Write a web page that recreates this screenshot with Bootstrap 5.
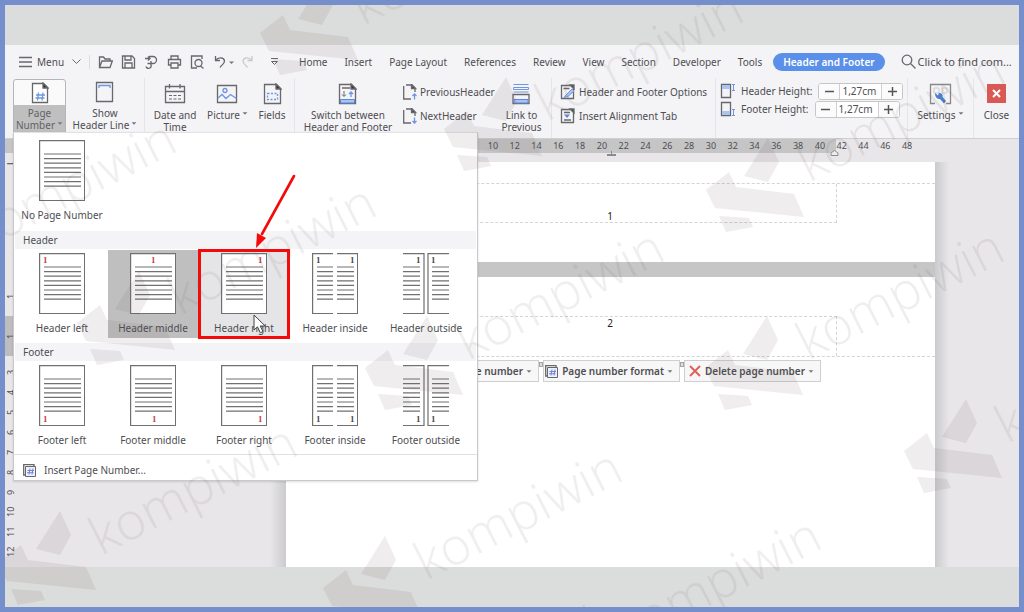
<!DOCTYPE html>
<html lang="en">
<head>
<meta charset="utf-8">
<meta name="viewport" content="width=device-width, initial-scale=1">
<title>Header and Footer</title>
<link href="https://cdn.jsdelivr.net/npm/bootstrap@5.3.0/dist/css/bootstrap.min.css" rel="stylesheet">
<style>
:root{--ink:#4e4e52;--chrome:#f4f3f6;--canvas:#e8e6e9;--rule:#c5c5c6}
body{font-family:"Noto Sans","Open Sans",sans-serif;font-size:10px;line-height:12px;color:var(--ink)}
svg{display:block;flex:none}
.frame{min-height:100vh;border:5px solid #748fcb;background:#dbdddc;padding:40px 0;overflow:hidden}
.plain{border:0;background:none;padding:0;color:inherit;font:inherit;white-space:nowrap}
.ic{fill:none;stroke:#68686c;stroke-width:1.3}
.ic .b{stroke:#6f96e2}
.ic .s{fill:#5b86dc;stroke:none}
/* tab strip */
.strip{background:var(--chrome);height:33px;padding-left:14px}
.quick{width:280px}
.tabs a{color:var(--ink);text-decoration:none;white-space:nowrap}
.tabs{gap:17px}
.tabs .on{background:#5b90ea;color:#fff;font-weight:600;border-radius:10px;padding:3px 10px;margin-left:-6px}
.find{font-size:11px;gap:2px;margin-left:16px;min-width:0}
.find input{font-size:11px;width:100px;height:20px;outline:0}
.find input::placeholder{color:var(--ink);opacity:1}
.bar{width:1px;background:#dddce0;align-self:stretch}
/* ribbon */
.ribbon{display:grid;background:var(--chrome);height:61px;border-bottom:1px solid #cfcfd1;
 grid-template-columns:minmax(0,8fr) minmax(0,53fr) minmax(0,79fr) minmax(0,60fr) minmax(0,45fr) minmax(0,45fr) minmax(0,106fr) minmax(0,91fr) minmax(0,60fr) minmax(0,164fr) minmax(0,192fr) minmax(0,66fr) minmax(0,45fr)}
.cell{display:flex;justify-content:center;align-items:flex-start}
.edge{border-right:1px solid #e6e5e9}
.tool{display:flex;flex-direction:column;align-items:center;gap:4px;padding-top:5px}
.tool svg{height:22px}
.up{padding-top:3px}
.pick{width:100%;border:1px solid #b5b5b7;border-radius:3px 3px 0 0;background:linear-gradient(#fafafa 25px,#bfbfc0 25px);gap:3px;padding:2px 0 4px;margin-top:1px;color:#626266}
.caret{display:inline-block;border:3px solid transparent;border-top-color:#77777b;border-bottom:0;vertical-align:4px;margin-left:2px;transform:scale(.8)}
.pair{display:flex;flex-direction:column;gap:8px;padding-top:6px;align-items:flex-start}
.pair .plain{display:flex;align-items:center;gap:3px;height:16px}
.nudge{padding-left:2px}
.size{display:flex;align-items:center;gap:6px;height:18px;white-space:nowrap}
.size svg{margin-right:-1px}
.spin{display:flex;width:85px;height:17px;border:1px solid #c6c6c9;border-radius:3px;background:#fff;overflow:hidden}
.spin button{width:20px;background:#fbfbfc;display:flex;align-items:center;justify-content:center}
.spin svg{margin:0}
.spin input{flex:1;min-width:0;border:solid #d0d0d3;border-width:0 1px;padding:0 2px;font-size:10px;color:var(--ink);outline:0}
/* page number gallery */
.gallery{position:absolute;z-index:5;left:0;top:54px;width:465px;height:349px;background:#fff;border:1px solid #c9c9cb;border-top-color:#e2e2e4;box-shadow:0 1px 2px #0002;white-space:nowrap}
.tiles{display:flex;gap:1px;padding-left:3px}
.tile{width:90px;height:88px;display:flex;flex-direction:column;align-items:center;padding-top:3px;gap:8px}
.tile.sel{background:#bfbfc0}
.tile.hot{background:#e5e5e7;outline:3px solid #f50a0a;outline-offset:-2px;position:relative}
.band{background:#f4f4f6;height:18px;line-height:18px;padding-left:8px;margin:6px 1px 1px}
.tiles + .band ~ .band{margin-top:5px}
.thumb{stroke:#707070;stroke-width:1.2;fill:#fff}
.num{font-family:"Liberation Serif",serif;font-size:9px;font-weight:700;stroke:none;fill:#c0404a}
.dk{fill:#4a4a4a}
.over{position:absolute;pointer-events:none}
/* document */
.ruler{display:grid;height:14px;grid-template-columns:477fr 436fr 101fr;background:linear-gradient(90deg,var(--rule) 82%,transparent 82%);font-size:9px;line-height:14px}
.marks{display:grid;grid-template-columns:repeat(20,1fr);text-align:center}
.marks span{position:relative}
.stop{position:absolute;right:-3px;bottom:-3px}
.stop.end{right:-8px}
.side{width:12px;font-size:9px}
.side span{display:flex;align-items:center;justify-content:center;height:20px;writing-mode:vertical-rl;transform:rotate(180deg)}
.side .dark{background:#bdbdbf;height:40px;margin:10px 0 6px}
.desk{background:var(--canvas)}
.paper{display:grid;grid-template-columns:269fr 649fr 84fr;margin-top:9px}
.fadel{background:linear-gradient(270deg,#cbcacd,#e8e6e900 16px)}
.fader{background:linear-gradient(90deg,#cbcacd,#e8e6e900 14px)}
.sheet{background:#fff}
.first{height:100px;padding-top:21px}
.second{padding-top:39px}
.split{height:15px;background:#c6c6c7}
.zone{height:39px;margin-right:98px;padding-left:98px;border:dashed #d4d4d6;border-width:0 1px 1px 0;text-align:center;color:#222}
.zone2{height:40px;border-width:1px 1px 0 0}
.dash-line{border-top:1px dashed #d4d4d6}
.chips{display:flex;gap:4px;padding:3px 114px 0 0;justify-content:flex-end}
.chips .plain{position:relative;display:flex;align-items:center;gap:4px;height:22px;border:1px solid #cfcfd2;background:#f7f7f8;font-weight:600;width:137px;justify-content:flex-end;padding-right:6px}
.chips .caret{margin-left:-1px}
.chips .plain + .plain::before{content:"";position:absolute;left:-5px;top:1px;width:4px;height:5px;border:1px solid #a5a5a8;background:#ddd}
.mark-layer{position:absolute;inset:0;width:100%;height:100%;pointer-events:none;z-index:8;fill:#6e5f5a}
.stamp{font-family:"Open Sans",sans-serif;font-weight:300;font-size:52px}
</style>
</head>
<body>
<svg width="0" height="0" class="position-absolute" aria-hidden="true">
 <defs>
  <g id="lines"><path d="M5 14h37M5 18.6h37M5 23.2h37M5 27.8h37M5 32.4h37M5 37h37M5 41.6h37M5 46.2h37"/></g>
  <g id="one"><path d="M.6.6h45v60h-45z"/><use href="#lines"/></g>
  <g id="inner"><path d="M21 .6H.6v60H21M25 .6h20.600v60H25"/><path d="M5 14h16M5 18.6h16M5 23.2h16M5 27.8h16M5 32.400h16M5 37h16M5 41.600h16M5 46.200h16M25 14h17M25 18.600h17M25 23.200h17M25 27.800h17M25 32.400h17M25 37h17M25 41.600h17M25 46.200h17"/></g>
  <g id="outer"><path d="M0 .6h21v60H0M46 .6H25v60h21"/><path d="M0 14h17M0 18.6h17M0 23.200h17M0 27.800h17M0 32.400h17M0 37h17M0 41.600h17M0 46.200h17M29 14h17M29 18.600h17M29 23.200h17M29 27.800h17M29 32.400h17M29 37h17M29 41.600h17M29 46.200h17"/></g>
  <g id="hash" fill="none"><path stroke="#68686c" stroke-width="1.300" d="M3.500 12H1.700V1.700H12v1.800"/><path stroke="#68686c" fill="#eef0fb" d="M3.500 3.500h10v10h-10z"/><path stroke="#6f86d8" d="M8 5.500l-1 6M11 5.500l-1 6M5.500 7.500h6.500M5 9.700h6.500"/></g>
  <g id="minus"><path stroke="#555" stroke-width="1.500" d="M0 4.500h9"/></g>
  <g id="plus"><path stroke="#555" stroke-width="1.500" d="M0 4.500h9M4.500 0v9"/></g>
  <g id="wm">
   <path d="M38-14 62-52 73-28 62-8zM0 0 23-18 30-3 88 4 98 27 9 18zM13 26 43 28 47 37 20 42z"/>
   <text class="stamp" transform="translate(103 -7) rotate(-27)">kompiwin</text>
  </g>
 </defs>
</svg>

<div class="frame d-flex flex-column position-relative">
 <header class="position-relative">
  <div class="strip d-flex align-items-center">
   <div class="quick d-flex align-items-center flex-shrink-0">
    <button class="plain d-flex align-items-center"><svg class="ic me-1" width="14" height="12"><path d="M0 1.500h13M0 6h13M0 10.500h13"/></svg>Menu<svg class="ic ms-2" width="9" height="6"><path stroke-width="1" d="M.5.500l4 4 4-4"/></svg></button>
    <span class="bar ms-2 me-2"></span>
    <button class="plain me-2" aria-label="Open"><svg class="ic" width="15" height="14"><path d="M1.500 12V2h4l1.500 2h5v2M1.500 12.500l2.500-6.500h10.300l-2.300 6.500z"/></svg></button>
    <button class="plain me-2" aria-label="Save"><svg class="ic" width="15" height="14"><path d="M1.500 1h9.500l2.500 2.500v9.500h-12zM4 1v4h6V1M4 13V8h7v5"/></svg></button>
    <button class="plain me-2" aria-label="Export"><svg class="ic" width="15" height="14"><path d="M1 3.500h5M4 1.500l2 2-2 2M5 1.500h4a3.500 3.500 0 0 1 0 7H3.500M7 6v4a2.500 2.500 0 0 1-5 1.500"/></svg></button>
    <button class="plain me-2" aria-label="Print"><svg class="ic" width="15" height="14"><path d="M4 4V1h7v3M4 10H1.500V4.500h12V10H11M4 8h7v5H4z"/></svg></button>
    <button class="plain me-2" aria-label="Preview"><svg class="ic" width="15" height="14"><path d="M7 13H1.500V1H12v3M10.500 11l3 2.500"/><circle cx="8.500" cy="8" r="3.500"/></svg></button>
    <button class="plain" aria-label="Undo"><svg class="ic" width="24" height="14"><path d="M2.500 1v4.500H7M2.500 5.500C5 2 11 2 11.500 6c0 3-3 4-4.500 6.500"/><path d="M16 6.500h5l-2.500 2.500z" fill="#77777b" stroke="none"/></svg></button>
    <button class="plain me-3 ms-1" aria-label="Redo"><svg class="ic" width="13" height="14" style="opacity:.3"><path d="M11 1v4.500H6.500M11 5.500C8 2 2.500 2 2 6c0 3 3 4 4.500 6.500"/></svg></button>
    <button class="plain" aria-label="More"><svg class="ic" width="9" height="9"><path stroke-width="1" d="M1 1.500h7M1.500 4.500h6l-3 3z"/></svg></button>
   </div>
   <nav class="tabs d-flex align-items-center">
    <a href="#">Home</a><a href="#">Insert</a><a href="#">Page Layout</a><a href="#">References</a><a href="#">Review</a><a href="#">View</a><a href="#">Section</a><a href="#">Developer</a><a href="#">Tools</a><a href="#" class="on">Header and Footer</a>
   </nav>
   <label class="find d-flex align-items-center"><svg class="ic" width="15" height="15"><circle cx="6" cy="6" r="4.800"/><path d="M9.500 9.500l5 5"/></svg><input class="plain" type="text" placeholder="Click to find com..." aria-label="Find commands"></label>
  </div>

  <div class="ribbon">
   <div></div>
   <div class="cell position-relative">
    <button class="plain tool pick"><svg class="ic" width="18" height="22"><path d="M1.500 1.500h11l4 4v15h-15z" fill="#fff"/><path d="M12 1l5 5h-5z" fill="#333"/><path class="b" d="M7.500 10.500l-1 8M12 10.500l-1 8M5 13h9M4.500 16h9"/></svg><span>Page<br>Number<i class="caret"></i></span></button>
    <div class="gallery">
     <div class="tiles pt-1"><button class="plain tile"><svg class="thumb" width="46" height="61"><use href="#one"/></svg>No Page Number</button></div>
     <div class="band">Header</div>
     <div class="tiles">
      <button class="plain tile"><svg class="thumb" width="46" height="61"><use href="#one"/><text class="num" x="4" y="10">1</text></svg>Header left</button>
      <button class="plain tile sel"><svg class="thumb" width="46" height="61"><use href="#one"/><text class="num" x="21" y="10">1</text></svg>Header middle</button>
      <button class="plain tile hot"><svg class="thumb" width="46" height="61"><use href="#one"/><text class="num" x="37" y="10">1</text></svg>Header right
       <svg class="over" width="14" height="20" style="left:54px;top:64px"><path d="M1 1v15l3.500-3.200 2.800 6 2.700-1.300-2.800-5.500h5z" fill="#fff" stroke="#444"/></svg>
       <svg class="over" width="44" height="76" style="left:55px;top:-76px"><path d="M40 2 8 60" stroke="#f50a0a" stroke-width="2.600" stroke-linecap="round"/><path d="M2 74 3 59l9 5z" fill="#f50a0a"/></svg></button>
      <button class="plain tile"><svg class="thumb" width="46" height="61"><use href="#inner"/><text class="num dk" x="4" y="10">1</text><text class="num dk" x="38" y="10">1</text></svg>Header inside</button>
      <button class="plain tile"><svg class="thumb" width="46" height="61"><use href="#outer"/><text class="num dk" x="13" y="10">1</text><text class="num dk" x="28" y="10">1</text></svg>Header outside</button>
     </div>
     <div class="band">Footer</div>
     <div class="tiles">
      <button class="plain tile"><svg class="thumb" width="46" height="61"><use href="#one"/><text class="num" x="4" y="57">1</text></svg>Footer left</button>
      <button class="plain tile"><svg class="thumb" width="46" height="61"><use href="#one"/><text class="num" x="22" y="57">1</text></svg>Footer middle</button>
      <button class="plain tile"><svg class="thumb" width="46" height="61"><use href="#one"/><text class="num" x="37" y="57">1</text></svg>Footer right</button>
      <button class="plain tile"><svg class="thumb" width="46" height="61"><use href="#inner"/><text class="num dk" x="4" y="57">1</text><text class="num dk" x="38" y="57">1</text></svg>Footer inside</button>
      <button class="plain tile"><svg class="thumb" width="46" height="61"><use href="#outer"/><text class="num dk" x="13" y="57">1</text><text class="num dk" x="28" y="57">1</text></svg>Footer outside</button>
     </div>
     <div class="border-top mt-1 pt-2 ps-2"><button class="plain d-flex align-items-center gap-2"><svg width="14" height="14"><use href="#hash"/></svg>Insert Page Number...</button></div>
    </div>
   </div>
   <div class="cell edge"><button class="plain tool up"><svg class="ic" width="19" height="22"><path d="M1.500 1.500h16v19h-16z"/><path class="b" d="M4 7V4.500h11V7"/></svg><span>Show<br>Header Line<i class="caret"></i></span></button></div>
   <div class="cell"><button class="plain tool"><svg class="ic" width="22" height="22"><path d="M1.500 3.500h19v16h-19zM1.500 8.500h19M5.500 1v4.500M16 1v4.500"/><path stroke-width="1" d="M5 12.500h3M9.500 12.500h3M14 12.500h3M5 16h3M9.500 16h3M14 16h3"/></svg><span>Date and<br>Time</span></button></div>
   <div class="cell"><button class="plain tool"><svg class="ic" width="22" height="22"><path d="M1.500 2.500h19v17h-19z"/><circle class="b" cx="9" cy="7.500" r="2"/><path class="b" d="M2 15l4-3.500 4 4 4.500-4 6 4"/></svg><span>Picture<i class="caret"></i></span></button></div>
   <div class="cell edge"><button class="plain tool"><svg class="ic" width="19" height="22"><path d="M1.500 1.500h12l4 4v15h-16z"/><path d="M13 1l5 5h-5z" fill="#333"/><path class="b" stroke-dasharray="2 1.500" d="M4.500 10.500h10v6h-10z"/></svg><span>Fields</span></button></div>
   <div class="cell"><button class="plain tool"><svg class="ic" width="19" height="22"><path d="M1.500 1.500h12l4 4v15h-16zM4 5h8"/><path d="M13 1l5 5h-5z" fill="#333"/><path fill="#a9c3f2" stroke="#5b86dc" stroke-width="1" d="M2.500 16.500h14v3.500h-14z"/><path d="M6 8v5M4 11.500l2 2 2-2" stroke-width="1"/><path class="b" d="M13 14V9M11 11l2-2 2 2"/></svg><span>Switch between<br>Header and Footer</span></button></div>
   <div class="pair">
    <button class="plain nudge"><svg class="ic" width="14" height="16"><path d="M8 15H.700V2M3 1h6l3 3v4"/><path d="M8.500.500l4 4h-4z" fill="#444"/><path class="b" d="M11.500 15.500V10M9.500 12l2-2 2 2"/></svg>PreviousHeader</button>
    <button class="plain nudge"><svg class="ic" width="14" height="16"><path d="M8 15H.700V2M3 1h6l3 3v4"/><path d="M8.500.500l4 4h-4z" fill="#444"/><path class="b" d="M11.500 9.500V15M9.500 13l2 2 2-2"/></svg>NextHeader</button>
   </div>
   <div class="cell edge"><button class="plain tool"><svg class="ic" width="18" height="22"><path class="b" stroke-width="1" d="M1.500 1.500h15M1.500 4.500h15v2h-15zM1.500 9h15"/><path d="M1 11.500h16v9H1z"/><path fill="#a9c3f2" stroke="#5b86dc" stroke-width="1" d="M2 16.500h14v3.500H2z"/></svg><span>Link to<br>Previous</span></button></div>
   <div class="pair ps-2 edge">
    <button class="plain"><svg class="ic" width="16" height="16"><path d="M1.500 1.500h10l2 2v11h-12zM3.500 4.500h6"/><path d="M10 1l4 4V1z" fill="#444"/><path fill="#a9c3f2" class="b" stroke-width="1" d="M6 11l6-6 2 2-6 5.500-4 1z"/></svg>Header and Footer Options</button>
    <button class="plain"><svg class="ic" width="16" height="16"><path d="M1.500 1.500h10l2 2v11h-12zM4 4.500h6M4 12h7"/><path d="M10 1l4 4V1z" fill="#444"/><path class="s" d="M4 6.500h6l-3 3.500z"/></svg>Insert Alignment Tab</button>
   </div>
   <div class="edge ps-1 pt-1">
    <div class="size"><svg class="ic" width="16" height="17"><path d="M1.500 1.500h9v13h-9z"/><path fill="#a9c3f2" stroke="none" d="M2 2h8v4H2z"/><path class="b" stroke-width="1" d="M12 1.500h3M12 7.500h3M13.500 1.500v6"/></svg><label for="hh">Header Height:</label><span class="spin"><button class="plain" aria-label="Decrease header height"><svg width="9" height="9"><use href="#minus"/></svg></button><input id="hh" value="1,27cm"><button class="plain" aria-label="Increase header height"><svg width="9" height="9"><use href="#plus"/></svg></button></span></div>
    <div class="size"><svg class="ic" width="16" height="17"><path d="M1.500 1.500h9v13h-9z"/><path fill="#a9c3f2" stroke="none" d="M2 10h8v4H2z"/><path class="b" stroke-width="1" d="M12 8.500h3M12 14.500h3M13.500 8.500v6"/></svg><label for="fh">Footer Height:</label><span class="spin"><button class="plain" aria-label="Decrease footer height"><svg width="9" height="9"><use href="#minus"/></svg></button><input id="fh" value="1,27cm"><button class="plain" aria-label="Increase footer height"><svg width="9" height="9"><use href="#plus"/></svg></button></span></div>
   </div>
   <div class="cell edge"><button class="plain tool"><svg class="ic" width="23" height="22"><path stroke="#888" d="M6 20.500H1.500v-19h20v19H17"/><path stroke="#ccc" stroke-width="1" d="M5 5h5v5H5zM13 5h5v5h-5z"/><path fill="#4a7fd0" stroke="none" d="M6 10l3 2.500 1-2.500c3 0 4 2 3.500 4l3.500 4-2 2.500-4-4.500c-3 0-5-2-5-6z"/></svg><span>Settings<i class="caret"></i></span></button></div>
   <div class="cell"><button class="plain tool"><svg width="19" height="22"><path fill="#d95a55" d="M0 1h19v19H0z"/><path stroke="#fff" stroke-width="2" d="M6 7l7 7M13 7l-7 7"/></svg><span>Close</span></button></div>
  </div>
 </header>

 <main class="desk flex-grow-1 d-flex flex-column">
  <div class="ruler"><span></span><div class="marks"><span>10</span><span>12</span><span>14</span><span>16</span><span>18</span><span>20<svg class="stop" width="9" height="5"><path fill="#8c8c8f" d="M0 3h9v2H0zM4 0h1v3H4z"/></svg></span><span>22</span><span>24</span><span>26</span><span>28</span><span>30</span><span>32</span><span>34</span><span>36</span><span>38</span><span>40<svg class="stop end" width="9" height="6"><path fill="#eee" stroke="#8c8c8f" d="M1 5.500V3l3.500-2.500L8 3v2.500z"/></svg></span><span>42</span><span>44</span><span>46</span><span>48</span></div>
  </div>
  <div class="d-flex flex-grow-1">
   <div class="side flex-shrink-0">
    <span>L</span><div style="height:113px"></div><span>1</span><span class="dark">1</span><span>3</span><span>4</span><span>5</span><span>6</span><span>7</span><span>8</span><span>9</span><span>10</span><span>11</span><span>12</span>
   </div>
   <div class="paper flex-grow-1">
    <div class="fadel"></div>
    <div class="d-flex flex-column">
     <section class="sheet first"><div class="dash-line"></div><div class="zone d-flex align-items-end justify-content-center">1</div></section>
     <div class="split"></div>
     <section class="sheet flex-grow-1 second">
      <div class="zone zone2">2</div><div class="dash-line"></div>
      <div class="chips">
       <button class="plain">Insert page number<i class="caret"></i></button>
       <button class="plain"><svg width="14" height="14"><use href="#hash"/></svg>Page number format<i class="caret"></i></button>
       <button class="plain"><svg width="12" height="12"><path stroke="#e0605c" stroke-width="2" d="M1 1l10 10M11 1 1 11"/></svg>Delete page number<i class="caret"></i></button>
      </div>
     </section>
    </div>
    <div class="fader"></div>
   </div>
  </div>
 </main>

 <svg class="mark-layer" aria-hidden="true"><g opacity=".11" transform="translate(-5 -5)">
  <use href="#wm" x="904" y="451"/><use href="#wm" x="323" y="588"/><use href="#wm" x="-2" y="563"/><use href="#wm" x="365" y="368"/><use href="#wm" x="706" y="190"/><use href="#wm" x="705" y="368"/><use href="#wm" x="77" y="323"/><use href="#wm" x="444" y="129"/><use href="#wm" x="260" y="33"/><use href="#wm" x="-123" y="259"/><use href="#wm" x="522" y="656"/>
 </g></svg>
</div>
<script src="https://cdn.jsdelivr.net/npm/bootstrap@5.3.0/dist/js/bootstrap.bundle.min.js"></script>
</body>
</html>
